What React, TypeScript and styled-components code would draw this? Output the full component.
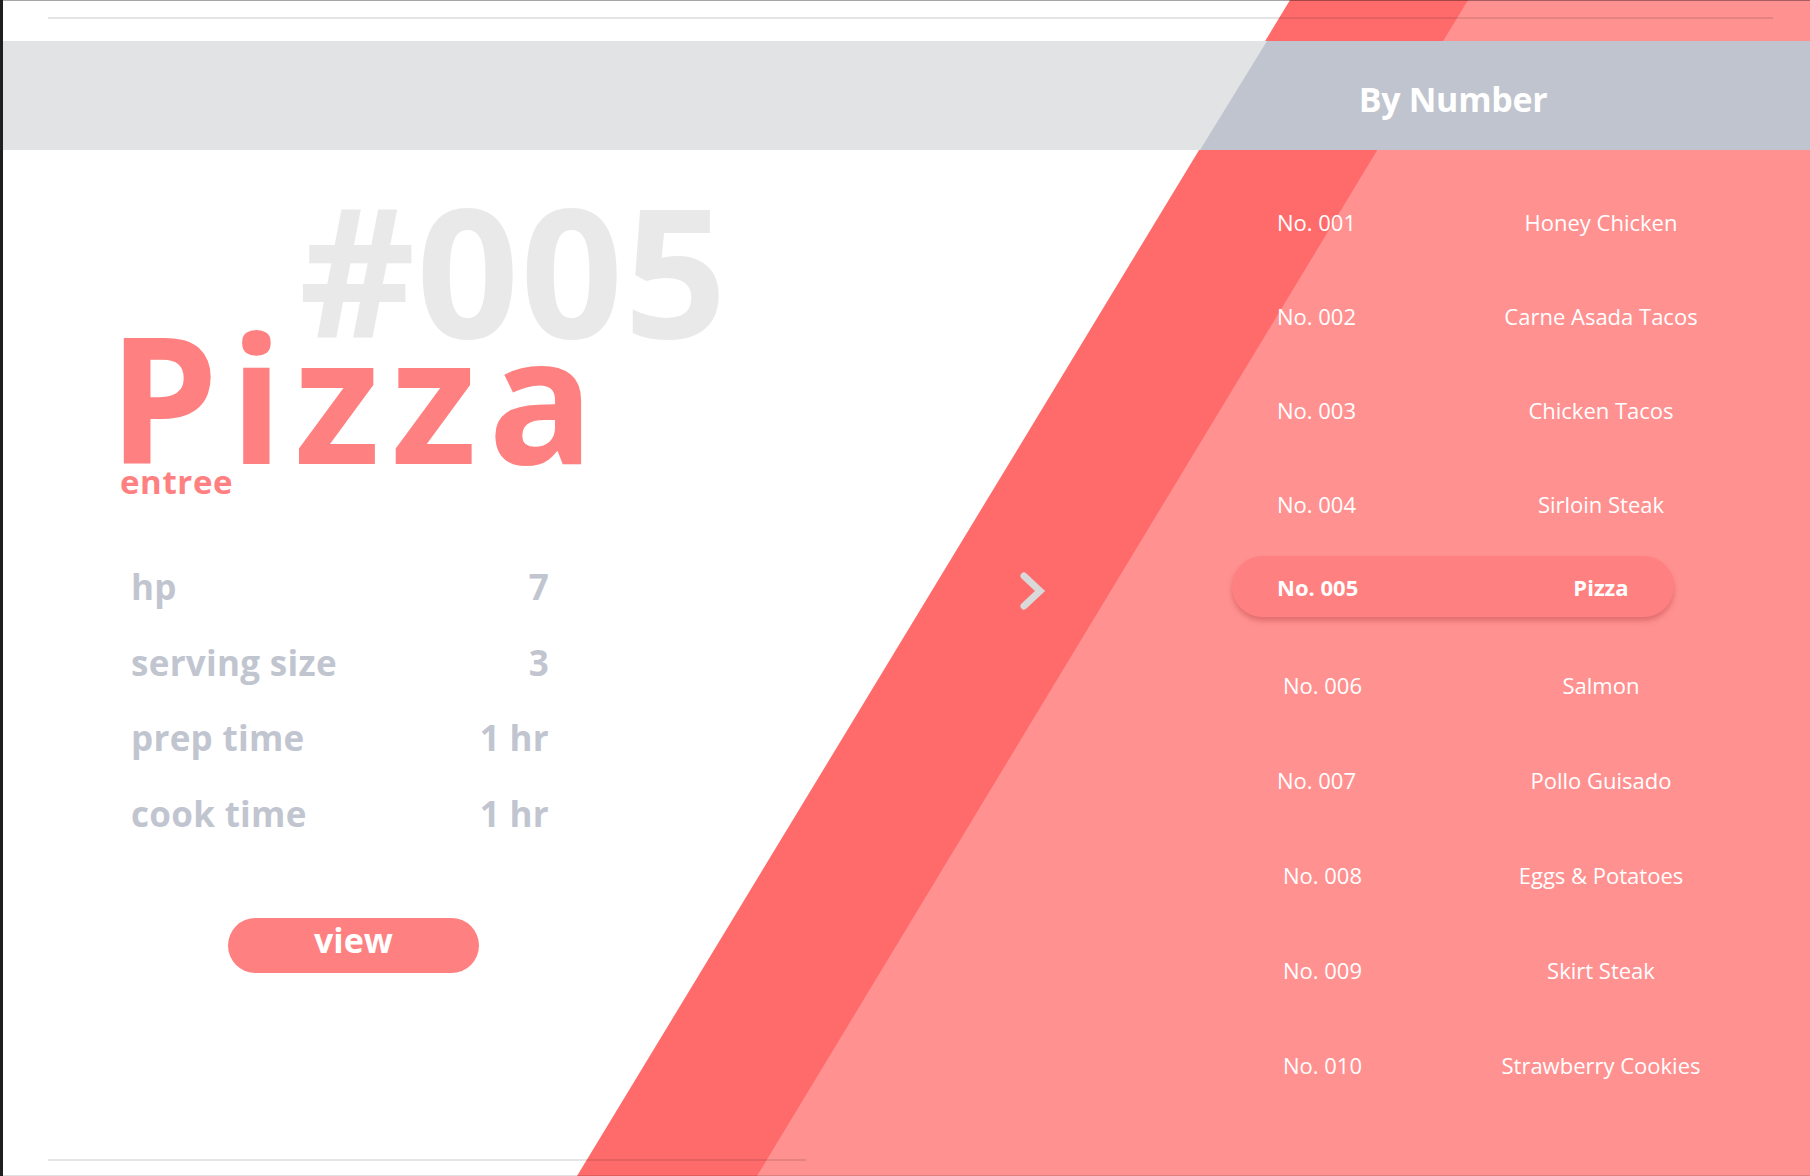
import React from "react";
import styled, { createGlobalStyle } from "styled-components";

const GlobalStyle = createGlobalStyle`
  html, body { margin: 0; padding: 0; background: #fff; }
  body { font-family: "Open Sans", "Noto Sans", sans-serif; }
  *, *::before, *::after { box-sizing: border-box; }
`;

const Frame = styled.div`
  position: relative;
  isolation: isolate;
  width: 1810px;
  height: 1176px;
  overflow: hidden;
  background: #ffffff;
  border-left: 3px solid #1f1f1f;
  display: flex;
  flex-direction: column;

  &::before {
    content: "";
    position: absolute;
    left: 0;
    right: 0;
    top: 0;
    height: 1px;
    background: rgba(0, 0, 0, 0.35);
    z-index: 5;
  }
  &::after {
    content: "";
    position: absolute;
    left: 0;
    right: 0;
    bottom: 0;
    height: 1px;
    background: rgba(0, 0, 0, 0.12);
    z-index: 5;
  }
`;

const Stripe = styled.div<{ $top: number; $bottom: number; $color: string }>`
  position: absolute;
  inset: 0;
  z-index: -1;
  background: ${(p) => p.$color};
  clip-path: polygon(${(p) => p.$top}px 0, 100% 0, 100% 100%, ${(p) => p.$bottom}px 100%);
`;

const Rule = styled.div<{ $width: number }>`
  flex-shrink: 0;
  width: ${(p) => p.$width}px;
  height: 2px;
  background: rgba(0, 0, 0, 0.1);
`;

const TopRule = styled(Rule)`
  margin: 17px 0 0 45px;
`;

const BottomRule = styled(Rule)`
  margin-top: auto;
  margin-bottom: 15px;
`;

const Band = styled.header`
  flex-shrink: 0;
  position: relative;
  margin-top: 22px;
  height: 109px;
  padding-top: 6px;
  background: #e2e3e5;
  display: grid;
  grid-template-columns: 1093px 714px;
  align-items: center;
`;

const BandAccent = styled.div`
  position: absolute;
  inset: 0;
  background: #c0c4ce;
  clip-path: polygon(1264px 0, 100% 0, 100% 100%, 1197px 100%);
`;

const BandTitle = styled.h1`
  grid-column: 2;
  justify-self: center;
  position: relative;
  z-index: 1;
  margin: 0;
  color: #ffffff;
  font-size: 34px;
  font-weight: 700;
  line-height: normal;
  letter-spacing: -0.3px;
`;

const Body = styled.main`
  flex: 1;
  min-height: 0;
  display: flex;
`;

const DetailPanel = styled.section`
  width: 1016px;
  flex-shrink: 0;
  display: flex;
  flex-direction: column;
  align-items: flex-start;
  padding: 29px 0 0 45px;
`;

const BigNumber = styled.div`
  margin-left: 251px;
  font-size: 180px;
  font-weight: 700;
  line-height: 1;
  color: #e9e9e9;
  letter-spacing: 1px;
`;

const DishName = styled.h2`
  margin: -51px 0 0 60px;
  font-size: 176px;
  font-weight: 700;
  line-height: 1;
  color: #ff8080;
  letter-spacing: 11px;
`;

const Category = styled.div`
  margin: -19px 0 0 72px;
  font-size: 33px;
  font-weight: 700;
  line-height: 1;
  color: #ff8080;
  letter-spacing: 0.6px;
`;

const Stats = styled.dl`
  margin: 51px 0 0 83px;
  width: 418px;
  display: grid;
  grid-auto-rows: 75.5px;
`;

const StatRow = styled.div`
  display: flex;
  justify-content: space-between;
  align-items: center;
  font-size: 35px;
  font-weight: 700;
  line-height: 75px;
  color: #c1c5d0;
  letter-spacing: 0.3px;
`;

const StatLabel = styled.dt`
  margin: 0;
`;

const StatValue = styled.dd`
  margin: 0;
`;

const ViewButton = styled.button`
  margin: 67px 0 0 180px;
  width: 251px;
  height: 55px;
  padding: 0 0 11px;
  border: none;
  border-radius: 28px;
  background: #ff8080;
  color: #ffffff;
  font-family: inherit;
  font-size: 34px;
  font-weight: 700;
  line-height: 44px;
  cursor: pointer;
`;

const ChevronCol = styled.div`
  width: 77px;
  flex-shrink: 0;
  padding-top: 421px;
`;

const List = styled.ol`
  width: 714px;
  flex-shrink: 0;
  margin: 0;
  padding: 25px 0 0;
  list-style: none;
  display: grid;
  grid-template-rows: repeat(4, 94px) 86px repeat(5, 95px);
  align-content: start;
`;

const Row = styled.li<{ $active?: boolean }>`
  display: grid;
  grid-template-columns: 200px 248px;
  align-items: center;
  padding-left: 181px;
  color: #ffffff;
  font-size: 22px;
  font-weight: 400;
  white-space: nowrap;

  ${(p) =>
    p.$active &&
    `
    align-self: start;
    margin: 5px 0 0 136px;
    width: 442px;
    height: 61px;
    padding-left: 45px;
    border-radius: 31px;
    background: #ff8080;
    box-shadow: 0 4px 5px rgba(190, 70, 70, 0.45);
    font-weight: 700;
  `}
`;

const RowNumber = styled.span<{ $shift: number }>`
  padding-left: ${(p) => p.$shift}px;
`;

const RowName = styled.span`
  text-align: center;
`;

type Dish = { no: string; name: string; shift: number };

const dishes: Dish[] = [
  { no: "No. 001", name: "Honey Chicken", shift: 0 },
  { no: "No. 002", name: "Carne Asada Tacos", shift: 0 },
  { no: "No. 003", name: "Chicken Tacos", shift: 0 },
  { no: "No. 004", name: "Sirloin Steak", shift: 0 },
  { no: "No. 005", name: "Pizza", shift: 0 },
  { no: "No. 006", name: "Salmon", shift: 6 },
  { no: "No. 007", name: "Pollo Guisado", shift: 0 },
  { no: "No. 008", name: "Eggs & Potatoes", shift: 6 },
  { no: "No. 009", name: "Skirt Steak", shift: 6 },
  { no: "No. 010", name: "Strawberry Cookies", shift: 6 },
];

const stats = [
  { label: "hp", value: "7" },
  { label: "serving size", value: "3" },
  { label: "prep time", value: "1 hr" },
  { label: "cook time", value: "1 hr" },
];

const Chevron = () => (
  <svg width="30" height="40" viewBox="0 0 30 40" aria-hidden="true">
    <polyline
      points="5,5 21,20 5,35"
      fill="none"
      stroke="#d9d9d9"
      strokeWidth="7"
      strokeLinecap="round"
      strokeLinejoin="miter"
    />
  </svg>
);

export default function App() {
  const selected = 4;
  return (
    <>
      <GlobalStyle />
      <Frame>
        <Stripe $top={1287} $bottom={574} $color="#ff6b6b" />
        <Stripe $top={1465} $bottom={754} $color="#ff9191" />
        <TopRule $width={1725} />
        <Band>
          <BandAccent />
          <BandTitle>By Number</BandTitle>
        </Band>
        <Body>
          <DetailPanel>
            <BigNumber>#005</BigNumber>
            <DishName>Pizza</DishName>
            <Category>entree</Category>
            <Stats>
              {stats.map((s) => (
                <StatRow key={s.label}>
                  <StatLabel>{s.label}</StatLabel>
                  <StatValue>{s.value}</StatValue>
                </StatRow>
              ))}
            </Stats>
            <ViewButton>view</ViewButton>
            <BottomRule $width={758} />
          </DetailPanel>
          <ChevronCol>
            <Chevron />
          </ChevronCol>
          <List>
            {dishes.map((d, i) => (
              <Row key={d.no} $active={i === selected}>
                <RowNumber $shift={d.shift}>{d.no}</RowNumber>
                <RowName>{d.name}</RowName>
              </Row>
            ))}
          </List>
        </Body>
      </Frame>
    </>
  );
}
